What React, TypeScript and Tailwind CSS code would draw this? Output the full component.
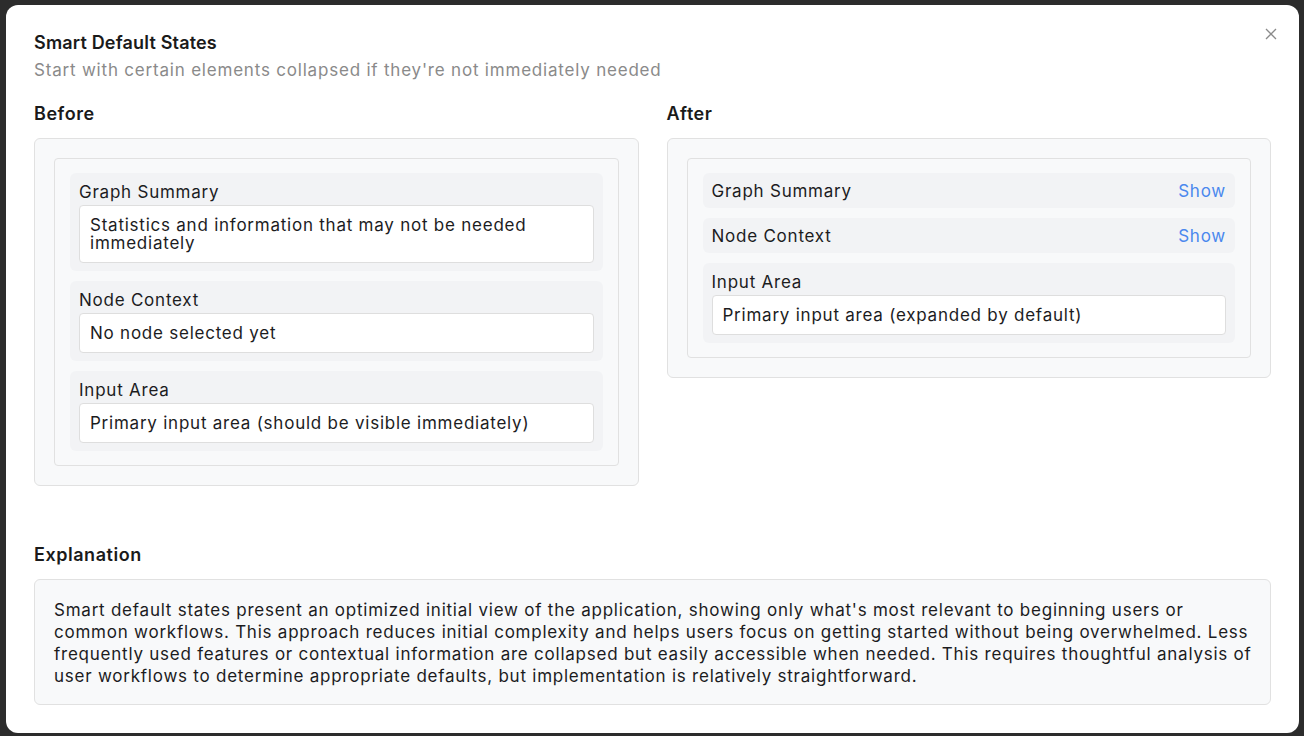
import React from 'react';

const font = { fontFamily: 'Inter, "Noto Sans", sans-serif' };

const Field: React.FC<{ label: string; text: string }> = ({ label, text }) => (
  <div className="rounded-md bg-[#f2f3f5] px-[9px] pt-2 pb-2">
    <div className="mb-0.5 text-[17px] leading-[22px] tracking-[0.045em] text-[#1c1c1e]">{label}</div>
    <div className="rounded border border-[#dedede] bg-white px-[10px] py-[10px] text-[17px] leading-[18px] tracking-[0.045em] text-[#1c1c1e]">
      {text}
    </div>
  </div>
);

const Collapsed: React.FC<{ label: string }> = ({ label }) => (
  <div className="flex h-[35px] items-center justify-between rounded-md bg-[#f2f3f5] px-[9px]">
    <span className="text-[17px] leading-[22px] tracking-[0.045em] text-[#1c1c1e]">{label}</span>
    <span className="text-[17px] leading-[22px] tracking-[0.045em] text-[#4a88ee]">Show</span>
  </div>
);

const Panel: React.FC<{ children: React.ReactNode }> = ({ children }) => (
  <div className="rounded-md border border-[#e1e1e1] bg-[#f8f9fa] p-[19px]">
    <div className="flex flex-col gap-[10px] rounded border border-[#e1e1e1] bg-[#f8f9fa] px-[15px] py-[14px]">
      {children}
    </div>
  </div>
);

export default function App() {
  return (
    <div className="h-[736px] w-full overflow-hidden bg-[#2c2c2c] pl-[6px] pr-[5px] pt-[5px]" style={font}>
      <div className="relative h-[728px] rounded-xl bg-white px-[28px] pt-[26px]">
        <button className="absolute right-[18px] top-[19px] p-1 text-[#8a8a8a]">
          <svg width="12" height="12" viewBox="0 0 12 12" fill="none" stroke="currentColor" strokeWidth="1.3">
            <path d="M1 1l10 10M11 1L1 11" />
          </svg>
        </button>

        <h2 className="text-[18px] font-semibold leading-6 tracking-[0.01em] text-[#1a1a1a]">Smart Default States</h2>
        <p className="mt-[3px] text-[17px] leading-6 tracking-[0.047em] text-[#8a8a8a]">
          Start with certain elements collapsed if they're not immediately needed
        </p>

        <div className="mt-5 grid grid-cols-2 items-start gap-[28px]">
          <div>
            <h3 className="mb-3 text-[18px] font-semibold leading-6 tracking-[0.03em] text-[#1a1a1a]">Before</h3>
            <Panel>
              <Field label="Graph Summary" text="Statistics and information that may not be needed immediately" />
              <Field label="Node Context" text="No node selected yet" />
              <Field label="Input Area" text="Primary input area (should be visible immediately)" />
            </Panel>
          </div>
          <div>
            <h3 className="mb-3 text-[18px] font-semibold leading-6 tracking-[0.03em] text-[#1a1a1a]">After</h3>
            <Panel>
              <Collapsed label="Graph Summary" />
              <Collapsed label="Node Context" />
              <Field label="Input Area" text="Primary input area (expanded by default)" />
            </Panel>
          </div>
        </div>

        <h3 className="mt-[57px] mb-3 text-[18px] font-semibold leading-6 tracking-[0.03em] text-[#1a1a1a]">Explanation</h3>
        <div className="rounded-md border border-[#e1e1e1] bg-[#f8f9fa] pl-[19px] pr-[12px] pt-[19px] pb-[17px] text-[17px] leading-[22px] tracking-[0.045em] text-[#1c1c1e]">
          Smart default states present an optimized initial view of the application, showing only what's most relevant to
          beginning users or common workflows. This approach reduces initial complexity and helps users focus on getting
          started without being overwhelmed. Less frequently used features or contextual information are collapsed but
          easily accessible when needed. This requires thoughtful analysis of user workflows to determine appropriate
          defaults, but implementation is relatively straightforward.
        </div>
      </div>
    </div>
  );
}
